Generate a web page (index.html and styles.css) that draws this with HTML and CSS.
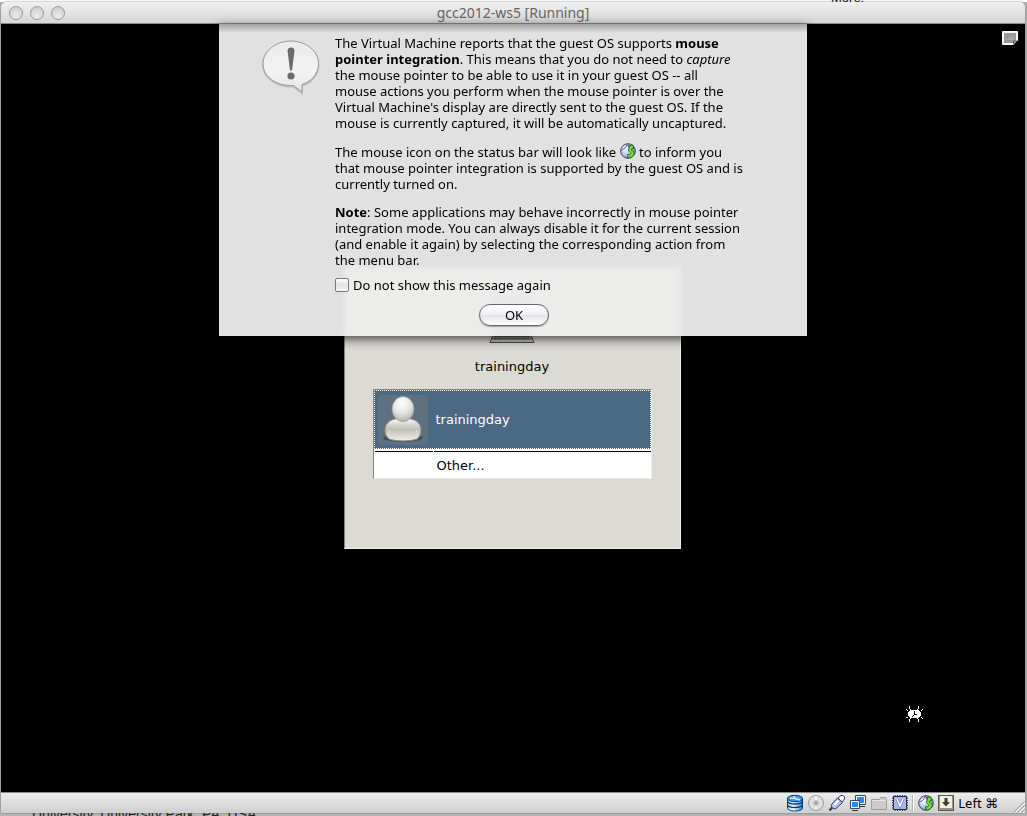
FILE: index.html
```html
<!DOCTYPE html>
<html lang="en">
<head>
<meta charset="utf-8">
<title>gcc2012-ws5 [Running]</title>
<link rel="stylesheet" href="styles.css">
</head>
<body>
<svg class="defs" aria-hidden="true">
  <defs>
    <linearGradient id="bubble" x1="0" y1="0" x2="0" y2="1"><stop offset="0" stop-color="#e9e9e9"/><stop offset=".6" stop-color="#f4f4f4"/><stop offset="1" stop-color="#e6e6e6"/></linearGradient>
    <radialGradient id="ball" cx=".35" cy=".35" r=".8"><stop offset="0" stop-color="#fff"/><stop offset=".55" stop-color="#b4bfe6"/><stop offset="1" stop-color="#5a679c"/></radialGradient>
    <radialGradient id="head" cx=".45" cy=".25" r=".8"><stop offset="0" stop-color="#fff"/><stop offset=".55" stop-color="#e2e3df"/><stop offset="1" stop-color="#a9aaa2"/></radialGradient>
    <linearGradient id="torso" x1="0" y1="0" x2="0" y2="1"><stop offset="0" stop-color="#fafaf8"/><stop offset=".5" stop-color="#bfc0b6"/><stop offset="1" stop-color="#f0f0ea"/></linearGradient>
    <linearGradient id="disk" x1="0" y1="0" x2="1" y2="0"><stop offset="0" stop-color="#8fd0ff"/><stop offset=".4" stop-color="#fff"/><stop offset="1" stop-color="#1d82e0"/></linearGradient>
    <symbol id="mouse" viewBox="0 0 16 16">
      <circle cx="8" cy="8" r="7.300" fill="url(#ball)" stroke="#3a4468"/>
      <path d="M1.500 7Q5 7 7.500 1M7.500 1 9 5" fill="none" stroke="#4d5885" stroke-width=".9"/>
      <path d="M8.500 2.500 13 2 13.500 6 12 5.500 11 7C15 8.500 15.500 11.500 11 14.500L7.500 15 8 11 9.500 12C11.500 10.500 11 9.500 8.500 8 8 6.500 9 5 10 4z" fill="#74e23a" stroke="#1c6a10" stroke-width=".9"/>
    </symbol>
  </defs>
</svg>

<div class="page-behind page-top">More!</div>

<main class="window">
  <header class="titlebar">
    <div class="lights">
      <button class="light" aria-label="Close"></button>
      <button class="light" aria-label="Minimize"></button>
      <button class="light" aria-label="Zoom"></button>
    </div>
    <h1 class="title">gcc2012-ws5 [Running]</h1>
  </header>

  <section class="screen">
    <svg class="note" viewBox="0 0 16 14" width="16" height="14" aria-hidden="true">
      <path d="M.5.5h15v9l-4 4h-11z" fill="#9a9d97" stroke="#fff"/>
      <path d="M1.500 1.500h13v7.500l-3.500 3.500h-9.500z" fill="#989b95" stroke="#f4f4f2"/>
      <path d="M3 9 12 4v5z" fill="#a6a9a2"/>
      <path d="M11.500 13V10H15z" fill="#c6c7c3" stroke="#5b5d5a"/>
    </svg>

    <div class="greeter">
      <svg class="laptop" viewBox="0 0 46 48" width="46" height="48" aria-hidden="true">
        <rect x="4" y="1" width="38" height="36" rx="2" fill="#777973"/>
        <rect x="6" y="3" width="34" height="31" fill="#a5bad2"/>
        <path d="M5 38h36l4 9.500H1z" fill="#8b8b87" stroke="#4b4b49"/>
        <path d="M2 46h42" stroke="#eee"/>
        <path d="M6 41.500h34M5 43.500h36" stroke="#4b4b49" stroke-width="1" stroke-dasharray="2 1"/>
      </svg>
      <p class="host">trainingday</p>
      <div class="users">
        <button class="user selected">
          <svg class="face" viewBox="0 0 50 50" width="50" height="50" aria-hidden="true">
            <rect width="50" height="50" rx="4" fill="#5f7180"/>
            <ellipse cx="25" cy="43" rx="20" ry="4" fill="#34404a" opacity=".6"/>
            <path d="M7 35C7 27 14 23 25 23s18 4 18 12c0 5-2 7-4 9-7 2.500-21 2.500-28 0-2-2-4-4-4-9z" fill="url(#torso)" stroke="#8a8b83"/>
            <path d="M11.500 44V35M38.500 44V35" stroke="#deded8"/>
            <ellipse cx="25" cy="14" rx="11" ry="12.500" fill="url(#head)" stroke="#92938c" stroke-width=".7"/>
          </svg>
          <span>trainingday</span>
        </button>
        <button class="user other"><span class="blank"></span><span class="other-name">Other...</span></button>
      </div>
    </div>

    <svg class="clock" viewBox="0 0 17 17" width="17" height="17" aria-hidden="true" shape-rendering="crispEdges">
      <path d="M4 4h9v1h1v1h1v4h-1v1h-1v1H4v-1H3v-1H2V6h1V5h1z" fill="#fff"/>
      <path d="M8 5h1v3h2v1H8v1H7v1H6v-1h1V9h1z" fill="#000"/>
      <path d="M3 0h1v3H3zM4 3h1v1H4zM12 0h1v3h-1zM11 3h1v1h-1zM3 13h1v3H3zM4 12h1v1H4zM12 13h1v3h-1zM11 12h1v1h-1zM0 3h1v1h1v1H1V4H0zM15 4h1V3h1v1h-1v1h-1zM0 11h2v1H0zM15 11h1v1h1v1h-1v-1h-1z" fill="#fff"/>
    </svg>

    <form class="sheet" role="dialog" aria-label="Mouse pointer integration">
      <svg class="alert" viewBox="0 0 60 56" width="60" height="56" aria-hidden="true">
        <path d="M30 2C45 2 57.500 12 57.500 24.500 57.500 35 50 43 41 45.500V53.500L32.500 46.500C15 47.500 2 37.500 2 24.500 2 12 15 2 30 2z" fill="none" stroke="#000" stroke-opacity=".15" stroke-width="2"/>
        <path d="M30 1C45 1 57.500 11 57.500 23.500 57.500 34 50 42 41 44.500V52L32.500 45.500C15 46.500 2 36.500 2 23.500 2 11 15 1 30 1z" fill="url(#bubble)" stroke="#999"/>
        <path d="M26.500 10.500Q27 7.500 30 7.500t3.500 3L31 30.500h-2z" fill="#6b6b6b"/>
        <circle cx="30" cy="36" r="3.600" fill="#6b6b6b"/>
      </svg>
      <div class="message">
        <p>The Virtual Machine reports that the guest OS supports <b>mouse<br>pointer integration</b>. This means that you do not need to <i>capture</i><br>the mouse pointer to be able to use it in your guest OS -- all<br>mouse actions you perform when the mouse pointer is over the<br>Virtual Machine's display are directly sent to the guest OS. If the<br>mouse is currently captured, it will be automatically uncaptured.</p>
        <p>The mouse icon on the status bar will look like <svg class="inline-icon" width="16" height="16" aria-hidden="true"><use href="#mouse"/></svg> to inform you<br>that mouse pointer integration is supported by the guest OS and is<br>currently turned on.</p>
        <p><b>Note</b>: Some applications may behave incorrectly in mouse pointer<br>integration mode. You can always disable it for the current session<br>(and enable it again) by selecting the corresponding action from<br>the menu bar.</p>
        <label class="again"><input type="checkbox" class="check"> Do not show this message again</label>
      </div>
      <button type="button" class="ok">OK</button>
    </form>
  </section>

  <footer class="statusbar">
    <svg width="18" height="18" viewBox="0 0 18 18" aria-hidden="true">
      <path d="M1.500 4v10c0 1.500 3 3 7 3s8-1 8-3V4z" fill="url(#disk)" stroke="#0d3a70"/>
      <path d="M1.500 7.500c1 2 4 2.500 7 2.500s7-.5 8-2.500M1.500 11c1 2 4 2.500 7 2.500s7-.5 8-2.500" fill="none" stroke="#0d3a70" stroke-width="1.400"/>
      <ellipse cx="9" cy="4.500" rx="7.500" ry="3.200" fill="#3d9cf0" stroke="#0d3a70"/>
      <path d="M4 4 9 4.500 8 2M9 4.500l5 1.500" stroke="#d5efff" stroke-width="1.500" fill="none"/>
    </svg>
    <svg width="18" height="18" viewBox="0 0 18 18" aria-hidden="true">
      <circle cx="9" cy="9" r="7.500" fill="#dedede" stroke="#999"/>
      <path d="M9 2v4M9 12v4" stroke="#f5f5f5" stroke-width="2"/>
      <circle cx="9" cy="9" r="2" fill="#eee" stroke="#999"/><circle cx="9" cy="9" r="1" fill="#888"/>
    </svg>
    <svg width="18" height="18" viewBox="0 0 18 18" aria-hidden="true">
      <path d="M1.500 16.500 4.500 13" stroke="#2c3566" stroke-width="2"/>
      <path d="M3.500 10.500 9.500 4l5 4.500-6.500 6C6 15.500 2.500 13.500 3.500 10.500z" fill="#b9c3f0" stroke="#2c3566"/>
      <path d="m10 4 3-2.500h2L16.500 3v2L14 8z" fill="#fff" stroke="#2c3566"/>
      <path d="M6 11 10.500 6.500" stroke="#fff" stroke-width="1.800"/>
    </svg>
    <svg width="18" height="18" viewBox="0 0 18 18" aria-hidden="true">
      <path d="M7.500 2.500h8v7h-8z" fill="#2b8be6" stroke="#fff"/><path d="M6.500 1.500h10v9h-10z" fill="none" stroke="#33486a"/><path d="M10 12.500h6" stroke="#333"/>
      <path d="M2.500 7.500h7v6h-7z" fill="#2b8be6" stroke="#fff"/><path d="M1.500 6.500h9v8h-9z" fill="none" stroke="#33486a"/><path d="M3 16.500h6" stroke="#333"/>
    </svg>
    <svg width="18" height="18" viewBox="0 0 18 18" aria-hidden="true">
      <path d="M1.500 15.500v-10h8l1-2h5l1 2v10z" fill="#cbcbcb" stroke="#a0a0a0"/><path d="M2.500 6.500h13" stroke="#e8e8e8"/>
    </svg>
    <svg width="18" height="18" viewBox="0 0 18 18" aria-hidden="true">
      <path d="M1 4h16M1 6.500h16M1 9h16M1 11.500h16M1 14h16M4 1v16M6.500 1v16M9 1v16M11.500 1v16M14 1v16" stroke="#222a50"/>
      <rect x="2.500" y="2.500" width="13" height="13" fill="#aeb7e8" stroke="#222a50"/>
      <path d="m6 5 3 7 3-7" fill="none" stroke="#6d78bd" stroke-width="3"/>
      <path d="m6 5 3 7 3-7" fill="none" stroke="#fff" stroke-width="1.500"/>
    </svg>
    <span class="divider"></span>
    <svg width="16" height="16" aria-hidden="true"><use href="#mouse"/></svg>
    <svg class="host-key" width="16" height="16" viewBox="0 0 16 16" aria-hidden="true">
      <rect x=".5" y=".5" width="15" height="15" fill="#9a9583" stroke="#5a574b"/>
      <rect x="2" y="1" width="12" height="12" fill="#f3f0e2"/>
      <path d="M6.500 3h3v4H12l-4 4.500L4 7h2.500z" fill="#3f3b30"/>
    </svg>
    <span class="key">Left ⌘</span>
    <svg class="grip" width="12" height="12" viewBox="0 0 12 12" aria-hidden="true">
      <path d="M1.500 12.500 12 2M5.500 12.500 12 6M9.500 12.500 12 10" stroke="#f6f6f6"/><path d="M.5 11.500 11.500.5M4.500 11.500l7-7M8.500 11.500l3-3" stroke="#8a8a8a" stroke-width=".8"/>
    </svg>
  </footer>
</main>

<div class="page-behind page-bottom">University, University Park, PA, USA</div>
</body>
</html>
```
FILE: styles.css
```css
* { box-sizing: border-box; }

body {
  margin: 0;
  height: 100vh;
  overflow: hidden;
  display: flex;
  flex-direction: column;
  background: #b4b4b4;
  font: 13px/16px "Noto Sans", "DejaVu Sans", sans-serif;
  color: #000;
}

button { font: inherit; padding: 0; border: 0; }
svg { flex: none; display: block; }
.defs { position: absolute; width: 0; height: 0; }

.page-behind {
  flex: none;
  display: flex;
  font: 13px/16px "Liberation Sans", Arial, sans-serif;
  overflow: hidden;
}
.page-top { height: 2px; background: #fff; padding-left: 831px; align-items: flex-end; line-height: 8px; }
.page-bottom { height: 3px; padding-left: 32px; font-size: 14px; line-height: 4px; align-items: flex-end; color: #222; }

.window {
  flex: 1;
  min-height: 0;
  display: flex;
  flex-direction: column;
  margin: 0 2px 0 1px;
  box-shadow: 0 0 2px #666;
  border-radius: 5px 5px 0 0;
}

.titlebar {
  flex: none;
  display: grid;
  grid-template-columns: 1fr auto 1fr;
  align-items: center;
  height: 22px;
  padding: 0 8px;
  background: linear-gradient(#f0f0f0, #d6d6d6);
  border-bottom: 1px solid #8c8c8c;
  border-radius: 5px 5px 0 0;
}
.lights { display: flex; gap: 7px; }
.light {
  width: 14px;
  height: 14px;
  border-radius: 50%;
  border: 1px solid #9a9a9a;
  background: radial-gradient(circle at 50% 80%, #ededed, #c8c8c8);
}
.title { margin: 0; font-size: 14px; line-height: 16px; font-weight: 400; color: #666; }

.screen {
  flex: 1;
  min-height: 0;
  position: relative;
  display: flex;
  align-items: center;
  justify-content: center;
  background: #000;
}
.note { position: absolute; top: 7px; right: 7px; }
.clock { position: absolute; right: 102px; bottom: 69px; }

.greeter {
  display: flex;
  flex-direction: column;
  align-items: center;
  width: 337px;
  height: 282px;
  margin-right: 2px;
  padding: 27px 28px 0;
  background: #dcdad5;
  border: 1px solid #eeeeea;
  border-left-color: #8a8373;
  font: 13px/16px "DejaVu Sans", sans-serif;
}
.host { margin: 16px 0 14px; }
.users {
  width: 279px;
  background: #fff;
  border: 1px solid #eeeeea;
  border-top-color: #8a857c;
  border-left-color: #8a857c;
}
.user {
  display: flex;
  align-items: center;
  width: 100%;
  background: #fff;
  text-align: left;
}
.selected { height: 59px; gap: 8px; padding-left: 3px; color: #fff; background: #4b6983; border: 1px dotted #fff; }
.other { gap: 1px; height: 29px; padding-top: 2px; align-items: stretch; }
.blank { width: 58px; margin-left: 1px; border-top: 1px solid #000; }
.other-name { flex: 1; padding: 6px 3px; border-top: 1px solid #000; }

.sheet {
  position: absolute;
  top: 0;
  left: 50%;
  transform: translateX(-50%);
  width: 588px;
  display: grid;
  grid-template-columns: 60px 1fr;
  column-gap: 14px;
  padding: 11px 40px 10px 42px;
  background: linear-gradient(rgba(0, 0, 0, .28), rgba(0, 0, 0, 0) 9px), rgba(236, 236, 236, .954);
  backdrop-filter: blur(2px);
  box-shadow: 0 3px 10px rgba(0, 0, 0, .7);
}
.alert { margin-top: 5px; }
.message p { margin: 0 0 12px; white-space: nowrap; }
.message p:nth-of-type(3) { margin-bottom: 9px; }
.inline-icon { display: inline-block; vertical-align: -2px; }
.again { display: flex; align-items: center; gap: 4px; }
.check {
  appearance: none;
  width: 14px;
  height: 14px;
  margin: 0;
  border: 1px solid #777;
  border-radius: 2px;
  background: linear-gradient(#fff, #e2e2e2 50%, #fafafa);
}
.ok {
  grid-column: 1 / -1;
  justify-self: center;
  width: 70px;
  height: 22px;
  margin-top: 11px;
  border: 1px solid #666;
  border-radius: 11px;
  background: linear-gradient(#fff, #eef0f4 48%, #e2e4e8 52%, #fff);
  box-shadow: 0 1px 1px rgba(0, 0, 0, .3);
}

.statusbar {
  flex: none;
  display: flex;
  align-items: center;
  justify-content: flex-end;
  gap: 3px;
  height: 21px;
  padding-left: 8px;
  background: linear-gradient(#ececec, #cfcfcf);
  border-top: 1px solid #8c8c8c;
}
.divider { width: 2px; height: 16px; margin-right: 1px; background: #fff; border-left: 1px solid #b5b5b5; }
.host-key { margin: 0 1px; }
.grip { align-self: flex-end; margin-left: 12px; }
```
